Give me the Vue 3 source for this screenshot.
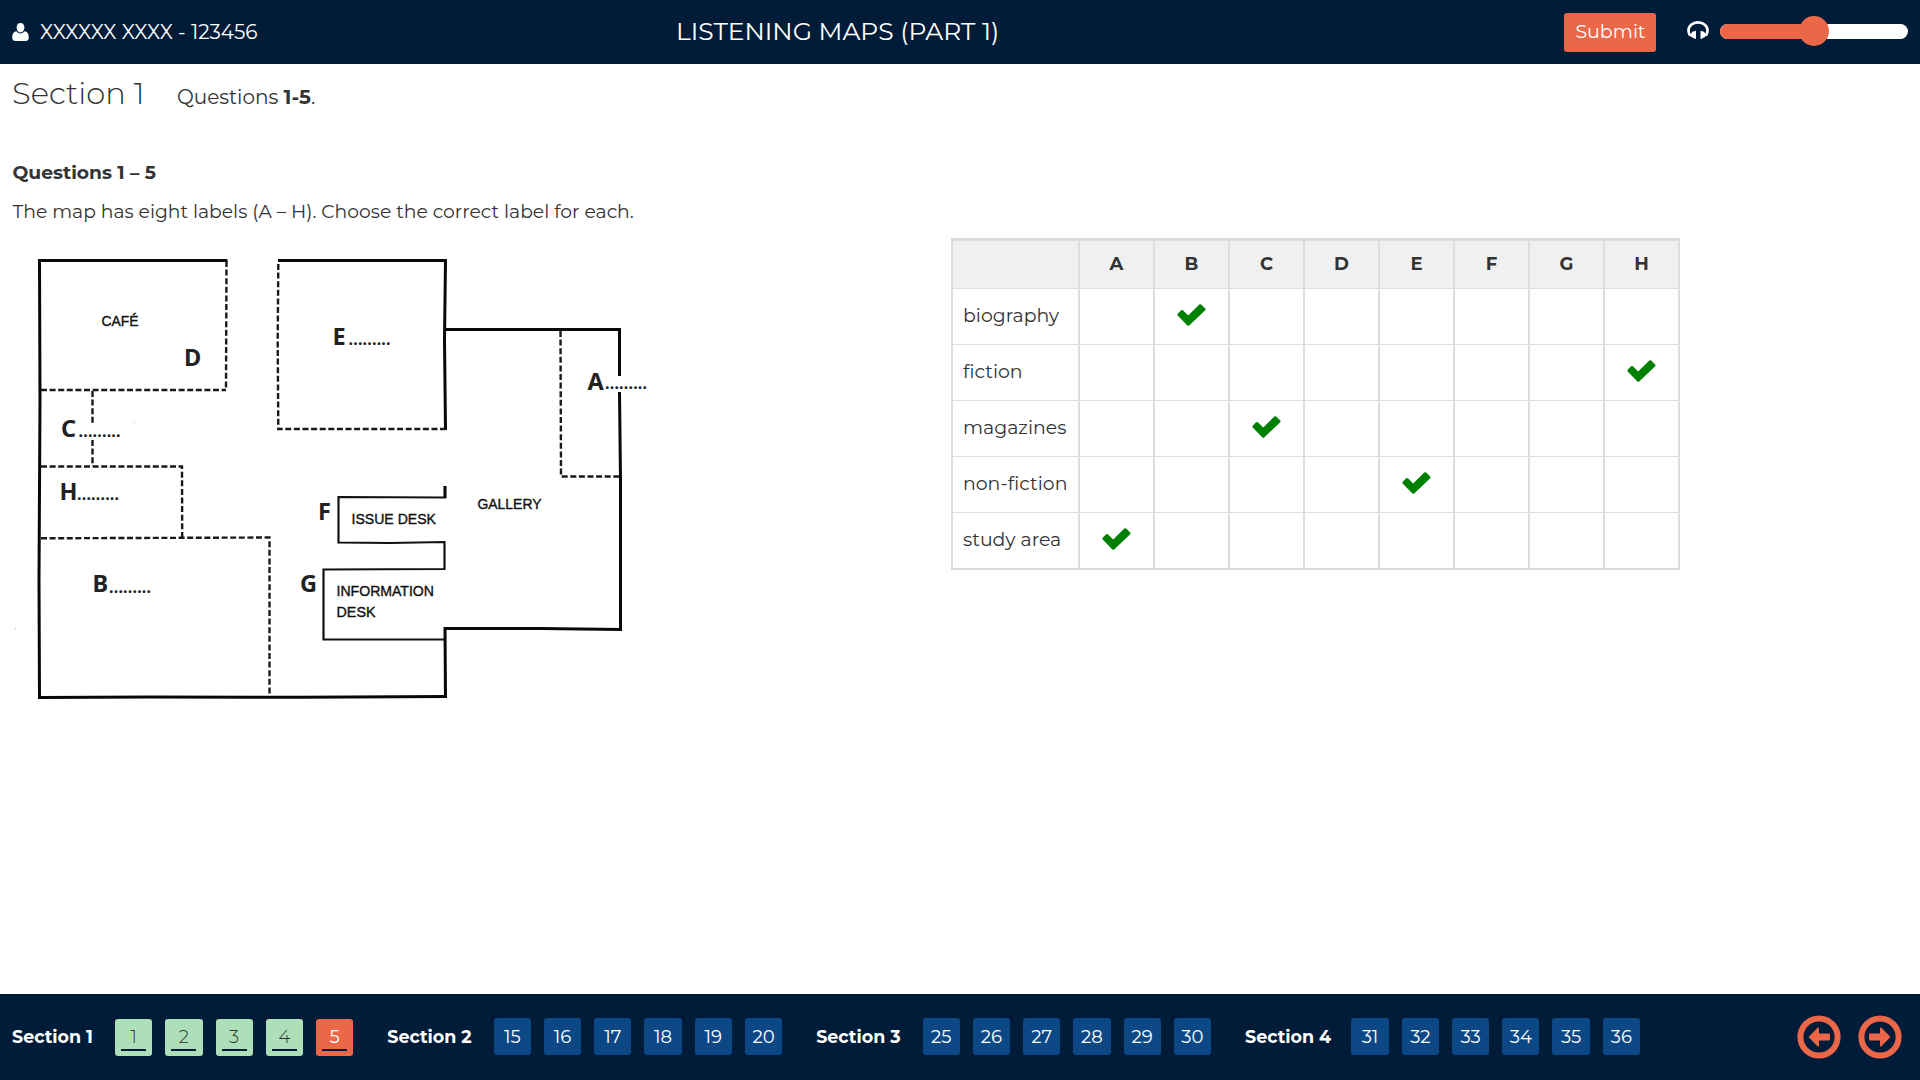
<script setup>
const columns = ['A', 'B', 'C', 'D', 'E', 'F', 'G', 'H']
const rows = [
  { name: 'biography', answer: 'B' },
  { name: 'fiction', answer: 'H' },
  { name: 'magazines', answer: 'C' },
  { name: 'non-fiction', answer: 'E' },
  { name: 'study area', answer: 'A' },
]
const sections = [
  { id: 1, questions: [1, 2, 3, 4, 5] },
  { id: 2, questions: [15, 16, 17, 18, 19, 20] },
  { id: 3, questions: [25, 26, 27, 28, 29, 30] },
  { id: 4, questions: [31, 32, 33, 34, 35, 36] },
]
const current = 5
// Map letters; dx/dy place the dotted answer line beside a letter.
const letters = [
  { t: 'D', x: 184, y: 365.5 },
  { t: 'F', x: 318, y: 520 },
  { t: 'G', x: 300, y: 591.5 },
  { t: 'C', x: 61, y: 436.5, dx: 78.5, dy: 436.5 },
  { t: 'E', x: 332.5, y: 345, dx: 348.5, dy: 345 },
  { t: 'A', x: 587.5, y: 389.5, dx: 605, dy: 389 },
  { t: 'H', x: 59.5, y: 500, dx: 77, dy: 500 },
  { t: 'B', x: 92.5, y: 592, dx: 109, dy: 593 },
]
</script>

<template>
  <div class="page">
    <header class="topbar">
      <div class="user">
        <svg class="user-icon" viewBox="0 0 17 18" width="17" height="18"><path d="M8.500 0C11 0 12.400 2 12.400 4.700S10.700 9.400 8.500 9.400 4.600 7.400 4.600 4.700 6 0 8.500 0ZM4.500 8.200C5.500 9.600 6.900 10.400 8.500 10.400S11.500 9.600 12.500 8.200C15.500 8.500 16.800 10.900 16.800 14.600 16.800 16.800 15.700 18 13.700 18H3.300C1.300 18 .2 16.800 .2 14.600 .2 10.900 1.500 8.500 4.500 8.200Z" fill="#fff"/></svg>
        <span class="user-name">XXXXXX XXXX - 123456</span>
      </div>
      <div class="title">LISTENING MAPS (PART 1)</div>
      <div class="controls">
        <button class="submit">Submit</button>
        <svg class="phones" viewBox="0 0 22 18" width="22" height="18"><path d="M3 14.500A9.700 9.300 0 0 1 1.500 9.500C1.500 4.800 5.500 1.400 11 1.400S20.500 4.800 20.500 9.500A9.700 9.300 0 0 1 19 14.500" fill="none" stroke="#fff" stroke-width="2.700"/><path d="M9 9.800V18L7.200 17.600 2 14.600 5.500 10.700ZM13.500 9.800V18L15.200 17.600 20 14.600 17 10.700Z" fill="#fff"/></svg>
        <div class="slider"><div class="fill"></div><div class="thumb"></div></div>
      </div>
    </header>

    <main class="content">
      <div class="heading">
        <h1>Section 1</h1>
        <p class="range">Questions <b>1-5</b>.</p>
      </div>
      <h2>Questions 1 – 5</h2>
      <p class="instruction">The map has eight labels (A – H). Choose the correct label for each.</p>

      <div class="task">
        <svg class="map" viewBox="0 240 660 480" width="660" height="480">
          <g class="wall">
            <path d="M227.500 260.500H39.500L40 400 39 580 39.500 697.500 150 697 300 697.300 446 696.500"/>
            <path d="M278 260.500H445.500L444.500 340 445.500 430M445 329.500H619.500V376M619.500 392L620.500 480V629.500L540 628.500H445L445.500 698"/>
          </g>
          <path class="desk" d="M445 486V497.500L338.500 497V542.500L390 543 444.500 542V569L323.500 569.500V639.500H444"/>
          <path class="dashed" d="M226.500 261L226 390M41 390H226M92.500 391V424M92.500 440V466M41 466.500H182L182.200 538M41 538.300L269.500 537.500V696M278.300 264L277.700 340 278.300 429H445M560.500 331L561 476.500H619"/>
          <path d="M445 486V498" class="wall"/>
          <g class="letter">
            <template v-for="l in letters" :key="l.t">
              <text :x="l.x" :y="l.y">{{ l.t }}</text>
              <text v-if="l.dx" class="dots" :x="l.dx" :y="l.dy" textLength="42">.........</text>
            </template>
          </g>
          <g class="room">
            <text x="101.500" y="326" textLength="37" lengthAdjust="spacingAndGlyphs">CAFÉ</text>
            <text x="477.500" y="509" textLength="64" lengthAdjust="spacingAndGlyphs">GALLERY</text>
            <text x="351.500" y="523.500" textLength="84.500" lengthAdjust="spacingAndGlyphs">ISSUE DESK</text>
            <text x="336.500" y="596" textLength="97.500" lengthAdjust="spacingAndGlyphs">INFORMATION</text>
            <text x="336.500" y="617.300" textLength="39" lengthAdjust="spacingAndGlyphs">DESK</text>
          </g>
          <circle cx="15.500" cy="628.500" r="1" fill="#ccc"/>
          <circle cx="134.500" cy="422.500" r=".8" fill="#ddd"/>
        </svg>

        <table>
          <thead>
            <tr><th class="name"></th><th v-for="c in columns" :key="c">{{ c }}</th></tr>
          </thead>
          <tbody>
            <tr v-for="r in rows" :key="r.name">
              <td class="name">{{ r.name }}</td>
              <td v-for="c in columns" :key="c">
                <svg v-if="c === r.answer" class="check" viewBox="0 0 29 22" width="29" height="22"><path d="M.700 9.700 4.100 6.300Q5 5.500 5.900 6.300L11.200 11.600 22.300.600Q23.200-.2 24.100.6L28.200 4.600Q28.900 5.400 28.200 6.200L12.200 21.500Q11.300 22.200 10.400 21.500L.700 11.500Q0 10.600.700 9.700Z" fill="#008000"/></svg>
              </td>
            </tr>
          </tbody>
        </table>
      </div>
    </main>

    <footer class="bottombar">
      <nav v-for="s in sections" :key="s.id" class="group">
        <strong>Section {{ s.id }}</strong>
        <a v-for="q in s.questions" :key="q" class="q" :class="{ done: s.id === 1, current: q === current }">{{ q }}</a>
      </nav>
      <div class="arrows">
        <svg viewBox="0 0 44 44" width="44" height="44"><circle cx="22" cy="22" r="18.600"/><path d="M11.500 22 20.800 12.500Q22 12 22 13.500V18.500H32Q33 18.500 33 19.500V24.500Q33 25.500 32 25.500H22V30.500Q22 32 20.800 31.500Z"/></svg>
        <svg viewBox="0 0 44 44" width="44" height="44"><circle cx="22" cy="22" r="18.600"/><path d="M32.500 22 23.200 12.500Q22 12 22 13.500V18.500H12Q11 18.500 11 19.500V24.500Q11 25.500 12 25.500H22V30.500Q22 32 23.200 31.500Z"/></svg>
      </div>
    </footer>
  </div>
</template>

<style>
body { background: #fff; }
</style>

<style scoped>
.page { box-sizing: border-box; width: 1920px; height: 1080px; display: flex; flex-direction: column; overflow: hidden; font-family: Montserrat, Inter, "Liberation Sans", sans-serif; font-size: 18.750px; color: #333; font-weight: 400; }
.topbar { height: 64px; flex: none; display: flex; align-items: center; background: #001c38; color: #fff; }
.user { display: flex; align-items: center; width: 676px; padding-left: 12px; box-sizing: border-box; }
.user-name { font-size: 20px; margin: -1px 0 0 11px; }
.title { font-size: 25px; line-height: 30px; margin-top: -2px; }
.controls { display: flex; align-items: center; margin-left: auto; padding-right: 12px; }
.submit { width: 92px; height: 39px; margin-top: 1px; border: 0; border-radius: 3px; padding: 0 0 2px 1px; background: #ec6747; color: #fff; font: inherit; font-size: 19px; }
.phones { margin: -4px 11px 0 31px; }
.slider { position: relative; width: 188px; height: 15px; margin-top: -1px; border-radius: 8px; background: #fff; }
.fill { width: 50%; height: 100%; border-radius: 8px 0 0 8px; background: #ec6747; }
.thumb { position: absolute; left: 79px; top: -8px; width: 30px; height: 30px; border-radius: 50%; background: #ec6747; }
.content { flex: 1; min-height: 0; }
h1, h2, p { margin: 0; }
.heading { display: flex; align-items: baseline; height: 94px; padding: 11px 0 0 12px; box-sizing: border-box; }
h1 { font-size: 30.600px; font-weight: 300; line-height: 36px; }
.range { margin-left: 32.500px; font-size: 20px; }
b { font-weight: 700; }
h2 { font-size: 18.750px; line-height: 30px; font-weight: 700; padding-left: 12.500px; }
.instruction { line-height: 24px; margin-top: 12px; padding-left: 12.500px; }
.task { display: flex; align-items: flex-start; margin-top: 16px; }
.map { flex: none; display: block; }
.wall { fill: none; stroke: #080808; stroke-width: 3; }
.desk { fill: none; stroke: #111; stroke-width: 2.200; }
.dashed { fill: none; stroke: #1a1a1a; stroke-width: 2.400; stroke-dasharray: 6 2.600; }
.letter { font: 700 23.500px "Noto Sans", "Open Sans", sans-serif; fill: #222; }
.dots { font-size: 16px; }
.room { font: 15.400px "Liberation Sans", sans-serif; fill: #111; stroke: #111; stroke-width: .4px; }
table { border-collapse: separate; border-spacing: 0; table-layout: fixed; width: 729px; margin: -2px 0 0 291px; border: solid #ddd; border-width: 3px 0 1px 2px; }
th, td { box-sizing: border-box; width: 75px; padding: 0 0 2px; border: solid #ddd; border-width: 0 2px 1px 0; text-align: center; vertical-align: middle; }
th { height: 48px; background: #f0f0f0; font-weight: 700; font-size: 18px; }
td { height: 56px; }
.name { width: 127px; padding-left: 10px; text-align: left; font-size: 18.900px; }
.check { display: block; margin: -1px auto 0; }
.bottombar { height: 86px; flex: none; display: flex; align-items: center; background: #001c38; color: #fff; font-size: 18px; }
.group { display: flex; align-items: center; }
.group + .group { margin-left: 21px; }
.group strong { font-weight: 700; font-size: 17.500px; width: 106.400px; line-height: 22px; margin-bottom: 1px; }
.group:first-child strong { width: 103px; }
.group:first-child { margin-left: 12px; }
.q { position: relative; box-sizing: border-box; width: 37.250px; height: 37px; border-radius: 3px; background: #0c4886; display: flex; justify-content: center; align-items: center; margin: 0 13px 1px 0; }
.done { background: #ade0b9; color: #333; margin: 1px 13px 0 0; padding-bottom: 1px; font-weight: 300; }
.done::after { content: ""; position: absolute; left: 6px; bottom: 5px; width: 25px; height: 2px; background: #001c38; }
.current { background: #ec6747; color: #fff; font-weight: 400; }
.arrows { margin-left: auto; display: flex; gap: 17px; padding-right: 18px; }
.arrows circle { fill: none; stroke: #ec6747; stroke-width: 6; }
.arrows path { fill: #ec6747; }
</style>
